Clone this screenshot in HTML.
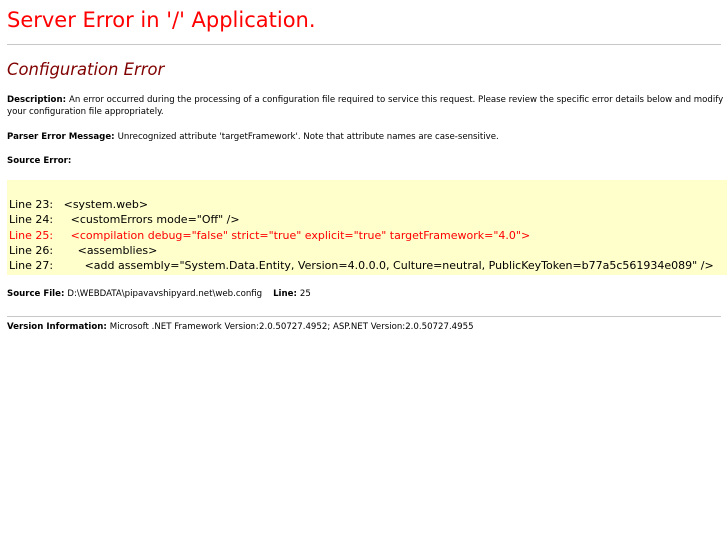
<!DOCTYPE html>
<html><head><meta charset="utf-8"><style>
body{margin:0;background:#fff;font-family:"DejaVu Sans","Liberation Sans",sans-serif;color:#000;width:727px;height:545px;overflow:hidden;position:relative}
.a{position:absolute;left:7px;white-space:pre;font-size:8.6px;line-height:12px}
h1{position:absolute;left:7px;top:5px;margin:0;font-weight:normal;font-size:21px;line-height:30px;color:red}
h2{position:absolute;left:7px;top:58px;margin:0;font-weight:normal;font-style:italic;font-size:16.4px;line-height:24px;color:#800000}
.hr{position:absolute;left:7px;width:714px;height:1px;background:#c8c8c8}
.box{position:absolute;left:7px;top:180px;width:720px;height:95px;background:#ffffcc}
.src{position:absolute;left:9px;top:197px;font-size:11px;line-height:15.3px;white-space:pre}
b{font-weight:bold}
</style></head><body>
<h1>Server Error in '/' Application.</h1>
<div class="hr" style="top:44px"></div>
<h2>Configuration Error</h2>
<div class="a" style="top:94px"><b>Description: </b>An error occurred during the processing of a configuration file required to service this request. Please review the specific error details below and modify
your configuration file appropriately.</div>
<div class="a" style="top:131px"><b>Parser Error Message: </b>Unrecognized attribute 'targetFramework'. Note that attribute names are case-sensitive.</div>
<div class="a" style="top:155px"><b>Source Error:</b></div>
<div class="box"></div>
<div class="src">Line 23:   &lt;system.web&gt;
Line 24:     &lt;customErrors mode="Off" /&gt;
<span style="color:red">Line 25:     &lt;compilation debug="false" strict="true" explicit="true" targetFramework="4.0"&gt;</span>
Line 26:       &lt;assemblies&gt;
Line 27:         &lt;add assembly="System.Data.Entity, Version=4.0.0.0, Culture=neutral, PublicKeyToken=b77a5c561934e089" /&gt;</div>
<div class="a" style="top:288px"><b>Source File: </b>D:\WEBDATA\pipavavshipyard.net\web.config    <b>Line: </b>25</div>
<div class="hr" style="top:316px"></div>
<div class="a" style="top:321px"><b>Version Information: </b>Microsoft .NET Framework Version:2.0.50727.4952; ASP.NET Version:2.0.50727.4955</div>
</body></html>
